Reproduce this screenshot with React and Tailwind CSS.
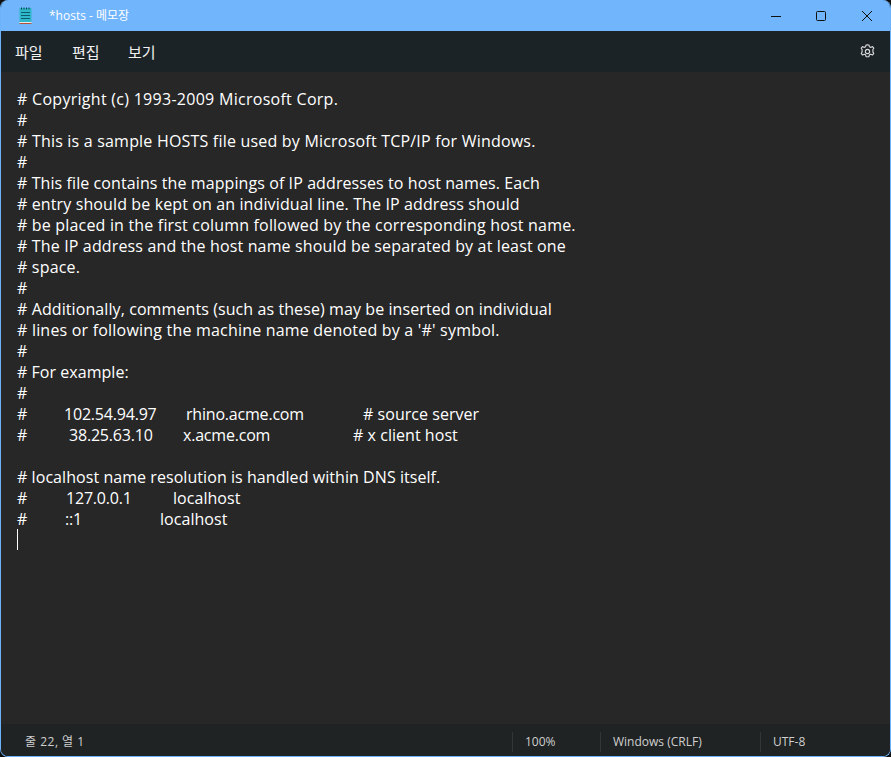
import React from "react";

const FONT = "font-['Open_Sans','Noto_Sans_CJK_KR',sans-serif]";

// tracking per line evens out the width difference of the fallback font
const lines = [
  ["# Copyright (c) 1993-2009 Microsoft Corp.", "tracking-[0.28px]"],
  ["#", ""],
  ["# This is a sample HOSTS file used by Microsoft TCP/IP for Windows.", "tracking-[0.2px]"],
  ["#", ""],
  ["# This file contains the mappings of IP addresses to host names. Each", "tracking-[0.09px]"],
  ["# entry should be kept on an individual line. The IP address should", "tracking-[0.12px]"],
  ["# be placed in the first column followed by the corresponding host name.", "tracking-[0.18px]"],
  ["# The IP address and the host name should be separated by at least one", "tracking-[0.15px]"],
  ["# space.", "tracking-[0.18px]"],
  ["#", ""],
  ["# Additionally, comments (such as these) may be inserted on individual", "tracking-[0.09px]"],
  ["# lines or following the machine name denoted by a '#' symbol.", "tracking-[0.2px]"],
  ["#", ""],
  ["# For example:", "tracking-[0.04px]"],
  ["#", ""],
];

// tab-aligned rows: each cell starts at its x offset inside the text area
const Row = ({ cells }) => (
  <div className="flex h-[21px] tracking-[-0.2px]">
    {cells.map(([width, text], i) => (
      <span key={i} className={width ? "shrink-0" : "tracking-[0.04px]"} style={width ? { width } : undefined}>
        {text}
      </span>
    ))}
  </div>
);

const StatusCell = ({ className, children }) => (
  <div className={`flex h-[20px] items-center border-l border-[#333536] pl-3 ${className}`}>
    {children}
  </div>
);

const NotepadIcon = () => (
  <svg width="13" height="17" viewBox="0 0 13 17">
    <rect x="0.500" y="1" width="12" height="14" fill="#2fb8c9" />
    <rect x="0.500" y="15" width="12" height="1" fill="#e8e8e8" />
    <rect x="0.500" y="16" width="12" height="1" fill="#b5533c" />
    <path d="M2 5.500h9M2 8.500h9M2 11.500h9" stroke="#0b5a6e" strokeWidth="1" />
    <path d="M2 1.500h1M4.500 1.500h1M7 1.500h1M9.500 1.500h1" stroke="#0b3a4a" strokeWidth="2" />
  </svg>
);

const App = () => {
  return (
    <div className={`h-[757px] w-[891px] overflow-hidden bg-[#0f0f0f] ${FONT}`}>
      <div className="flex h-full w-full flex-col overflow-hidden rounded-[8px] border border-t-0 border-[#6db3fb] bg-[#272727]">
        {/* title bar */}
        <div className="-mx-px flex h-[31px] shrink-0 items-center bg-[#71b5fd]">
          <div className="ml-[19px] flex w-[30px]">
            <NotepadIcon />
          </div>
          <span className="text-[12px] text-white">*hosts - 메모장</span>
          <div className="ml-auto flex items-center">
            <svg width="12" height="12" viewBox="0 0 12 12" className="mr-[33px]">
              <path d="M1 6.500h10" stroke="#111" strokeWidth="1" />
            </svg>
            <svg width="12" height="12" viewBox="0 0 12 12" className="mr-[34px]">
              <rect x="1.500" y="1.500" width="9" height="9" rx="1" fill="none" stroke="#111" strokeWidth="1" />
            </svg>
            <svg width="12" height="12" viewBox="0 0 12 12" className="mr-[18px]">
              <path d="M1 1l10 10M11 1L1 11" stroke="#111" strokeWidth="1" />
            </svg>
          </div>
        </div>

        {/* menu bar */}
        <div className="flex h-[41px] shrink-0 items-center bg-[#1c2327] pl-[14px] pr-[14px] pt-[2px] text-[15px] text-[#f2f2f2]">
          <span className="w-[57px]">파일</span>
          <span className="w-[56px]">편집</span>
          <span>보기</span>
          <svg width="17" height="17" viewBox="0 0 24 24" className="ml-auto -mt-[2px]" fill="none" stroke="#d8d8d8" strokeWidth="1.600" strokeLinejoin="round">
            <path d="M12 2.500l2 .3.800 2.600 1.800.8 2.400-1.200 1.900 2.200-1.400 2.300.3 2-.3 1 1.400 2.300-1.900 2.200-2.400-1.200-1.800.8-.8 2.600-2 .3-2-.3-.8-2.600-1.800-.8-2.400 1.200-1.900-2.200 1.400-2.300-.3-1 .3-2-1.400-2.300 1.900-2.200 2.400 1.200 1.800-.8.800-2.600z" />
            <circle cx="12" cy="12" r="3" />
          </svg>
        </div>

        {/* text area */}
        <div className="flex-1 whitespace-pre pl-4 pt-[17px] text-[16px] leading-[21px] text-white">
          {lines.map(([line, tracking], i) => (
            <div key={i} className={`h-[21px] ${tracking}`}>{line}</div>
          ))}
          <Row cells={[[47, "#"], [122, "102.54.94.97"], [177, "rhino.acme.com"], [0, "# source server"]]} />
          <Row cells={[[52, "#"], [114, "38.25.63.10"], [170, "x.acme.com"], [0, "# x client host"]]} />
          <div className="h-[21px]" />
          <div className="h-[21px] tracking-[0.06px]">{"# localhost name resolution is handled within DNS itself."}</div>
          <Row cells={[[49, "#"], [107, "127.0.0.1"], [0, "localhost"]]} />
          <Row cells={[[48, "#"], [95, "::1"], [0, "localhost"]]} />
          <div className="-mt-[1px] h-[21px] w-px bg-white" />
        </div>

        {/* status bar */}
        <div className="flex h-[32px] shrink-0 items-center bg-[#202324] pt-[4px] pr-[12px] text-[12px] text-[#cfcfcf]">
          <span className="ml-[24px] tracking-[0.5px]">줄 22, 열 1</span>
          <div className="ml-auto flex items-center">
            <StatusCell className="w-[88px]">100%</StatusCell>
            <StatusCell className="w-[160px]">Windows (CRLF)</StatusCell>
            <StatusCell className="w-[118px]">UTF-8</StatusCell>
          </div>
        </div>
      </div>
    </div>
  );
};

export default App;
